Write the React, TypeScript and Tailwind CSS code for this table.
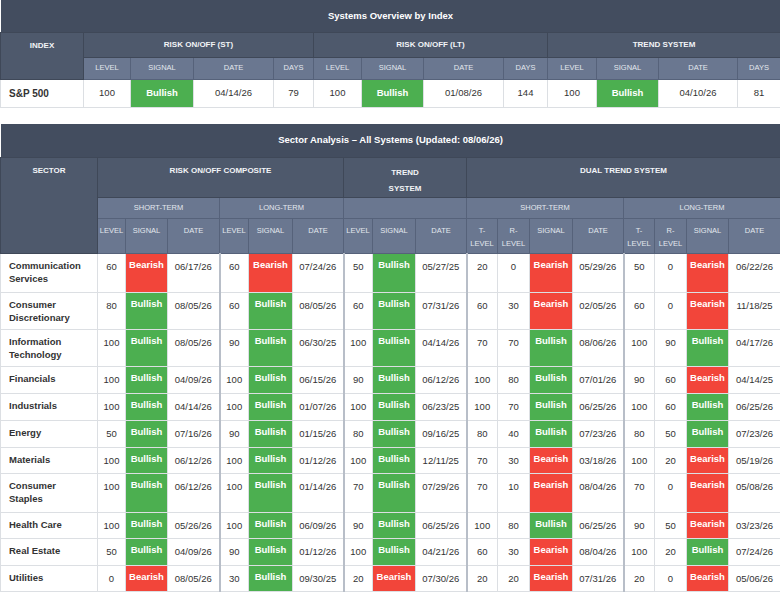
import React from "react";

type Row = {
  name: string[];
  cells: (string | number)[];
  h: string;
};

const SIGNAL_IDX = [1, 4, 7, 11, 15];
const GROUP_START = [3, 6, 9, 13];

const rows: Row[] = [
  { name: ["Communication", "Services"], h: "h-[39px]", cells: [60, "Bearish", "06/17/26", 60, "Bearish", "07/24/26", 50, "Bullish", "05/27/25", 20, 0, "Bearish", "05/29/26", 50, 0, "Bearish", "06/22/26"] },
  { name: ["Consumer", "Discretionary"], h: "h-[37px]", cells: [80, "Bullish", "08/05/26", 60, "Bullish", "08/05/26", 60, "Bullish", "07/31/26", 60, 30, "Bearish", "02/05/26", 60, 0, "Bearish", "11/18/25"] },
  { name: ["Information", "Technology"], h: "h-[37px]", cells: [100, "Bullish", "08/05/26", 90, "Bullish", "06/30/25", 100, "Bullish", "04/14/26", 70, 70, "Bullish", "08/06/26", 100, 90, "Bullish", "04/17/26"] },
  { name: ["Financials"], h: "h-[27px]", cells: [100, "Bullish", "04/09/26", 100, "Bullish", "06/15/26", 90, "Bullish", "06/12/26", 100, 80, "Bullish", "07/01/26", 90, 60, "Bearish", "04/14/25"] },
  { name: ["Industrials"], h: "h-[27px]", cells: [100, "Bullish", "04/14/26", 100, "Bullish", "01/07/26", 100, "Bullish", "06/23/25", 100, 70, "Bullish", "06/25/26", 100, 60, "Bullish", "06/25/26"] },
  { name: ["Energy"], h: "h-[27px]", cells: [50, "Bullish", "07/16/26", 90, "Bullish", "01/15/26", 80, "Bullish", "09/16/25", 80, 40, "Bullish", "07/23/26", 80, 50, "Bullish", "07/23/26"] },
  { name: ["Materials"], h: "h-[26px]", cells: [100, "Bullish", "06/12/26", 100, "Bullish", "01/12/26", 100, "Bullish", "12/11/25", 70, 30, "Bearish", "03/18/26", 100, 20, "Bearish", "05/19/26"] },
  { name: ["Consumer", "Staples"], h: "h-[39px]", cells: [100, "Bullish", "06/12/26", 100, "Bullish", "01/14/26", 70, "Bullish", "07/29/26", 70, 10, "Bearish", "08/04/26", 70, 0, "Bearish", "05/08/26"] },
  { name: ["Health Care"], h: "h-[26px]", cells: [100, "Bullish", "05/26/26", 100, "Bullish", "06/09/26", 90, "Bullish", "06/25/26", 100, 80, "Bullish", "06/25/26", 90, 50, "Bearish", "03/23/26"] },
  { name: ["Real Estate"], h: "h-[27px]", cells: [50, "Bullish", "04/09/26", 90, "Bullish", "01/12/26", 100, "Bullish", "04/21/26", 60, 30, "Bearish", "08/04/26", 100, 20, "Bullish", "07/24/26"] },
  { name: ["Utilities"], h: "h-[26px]", cells: [0, "Bearish", "08/05/26", 30, "Bullish", "09/30/25", 20, "Bearish", "07/30/26", 20, 20, "Bearish", "07/31/26", 20, 0, "Bearish", "05/06/26"] },
];

const topCols = ["w-[83px]", "w-[47px]", "w-[63px]", "w-[80px]", "w-[40px]", "w-[48px]", "w-[62px]", "w-[80px]", "w-[44px]", "w-[49px]", "w-[62px]", "w-[79px]", "w-[43px]"];
const sectorCols = ["w-[97px]", "w-[28px]", "w-[42px]", "w-[52px]", "w-[29px]", "w-[44px]", "w-[51px]", "w-[29px]", "w-[43px]", "w-[51px]", "w-[31px]", "w-[32px]", "w-[43px]", "w-[51px]", "w-[31px]", "w-[32px]", "w-[42px]", "w-[52px]"];

const title = "bg-[#434d5f] text-white text-[9.5px] font-bold text-center";
const head1 = "bg-[#4e596c] text-[#f2f4f7] text-[8px] font-bold text-center border border-[#3f4858]";
const head2 = "bg-[#6a7790] text-[#e3e7ee] text-[7.5px] font-normal text-center border border-[#56627a]";
const cell = "border border-[#dcdfe3] text-[9.5px] text-[#333] text-center";

function signalClass(v: string) {
  return v === "Bullish" ? "bg-[#4caf50]" : "bg-[#f2453a]";
}

function TopTable() {
  const groups = [
    { label: "RISK ON/OFF (ST)", data: [100, "Bullish", "04/14/26", 79] },
    { label: "RISK ON/OFF (LT)", data: [100, "Bullish", "01/08/26", 144] },
    { label: "TREND SYSTEM", data: [100, "Bullish", "04/10/26", 81] },
  ];
  return (
    <table className="w-[780px] table-fixed border-collapse">
      <colgroup>
        {topCols.map((c, i) => (
          <col key={i} className={c} />
        ))}
      </colgroup>
      <thead>
        <tr className="h-[32px]">
          <th colSpan={13} className={title}>
            Systems Overview by Index
          </th>
        </tr>
        <tr className="h-[25px]">
          <th rowSpan={2} className={`${head1} align-top pt-[7px]`}>
            INDEX
          </th>
          {groups.map((g) => (
            <th key={g.label} colSpan={4} className={head1}>
              {g.label}
            </th>
          ))}
        </tr>
        <tr className="h-[22px]">
          {groups.map((g) =>
            ["LEVEL", "SIGNAL", "DATE", "DAYS"].map((s) => (
              <th key={g.label + s} className={head2}>
                {s}
              </th>
            ))
          )}
        </tr>
      </thead>
      <tbody>
        <tr className="h-[28px]">
          <td className={`${cell} text-left pl-[8px] font-bold text-[10px]`}>S&amp;P 500</td>
          {groups.map((g) =>
            g.data.map((v, i) =>
              i === 1 ? (
                <td key={g.label + i} className={`${cell} ${signalClass(String(v))} align-top pt-[6px] text-white text-[8px] font-bold`}>
                  {v}
                </td>
              ) : (
                <td key={g.label + i} className={cell}>
                  {v}
                </td>
              )
            )
          )}
        </tr>
      </tbody>
    </table>
  );
}

function SectorTable() {
  return (
    <table className="w-[780px] table-fixed border-collapse">
      <colgroup>
        {sectorCols.map((c, i) => (
          <col key={i} className={c} />
        ))}
      </colgroup>
      <thead>
        <tr className="h-[34px]">
          <th colSpan={18} className={title}>
            Sector Analysis – All Systems (Updated: 08/06/26)
          </th>
        </tr>
        <tr className="h-[40px]">
          <th rowSpan={3} className={`${head1} align-top pt-[7px]`}>
            SECTOR
          </th>
          <th colSpan={6} className={`${head1} align-top pt-[7px]`}>
            RISK ON/OFF COMPOSITE
          </th>
          <th colSpan={3} className={`${head1} align-top pt-[7px] leading-[16px]`}>
            TREND
            <br />
            SYSTEM
          </th>
          <th colSpan={8} className={`${head1} align-top pt-[7px]`}>
            DUAL TREND SYSTEM
          </th>
        </tr>
        <tr className="h-[21px]">
          <th colSpan={3} className={head2}>SHORT-TERM</th>
          <th colSpan={3} className={head2}>LONG-TERM</th>
          <th colSpan={3} className={head2}></th>
          <th colSpan={4} className={head2}>SHORT-TERM</th>
          <th colSpan={4} className={head2}>LONG-TERM</th>
        </tr>
        <tr className="h-[35px]">
          {["LEVEL", "SIGNAL", "DATE", "LEVEL", "SIGNAL", "DATE", "LEVEL", "SIGNAL", "DATE"].map((s, i) => (
            <th key={i} className={`${head2} align-top pt-[5px] leading-[13px]`}>
              {s}
            </th>
          ))}
          {[0, 1].map((k) => (
            <React.Fragment key={k}>
              <th className={`${head2} align-top pt-[5px] leading-[13px]`}>
                T-
                <br />
                LEVEL
              </th>
              <th className={`${head2} align-top pt-[5px] leading-[13px]`}>
                R-
                <br />
                LEVEL
              </th>
              <th className={`${head2} align-top pt-[5px] leading-[13px]`}>SIGNAL</th>
              <th className={`${head2} align-top pt-[5px] leading-[13px]`}>DATE</th>
            </React.Fragment>
          ))}
        </tr>
      </thead>
      <tbody>
        {rows.map((r) => (
          <tr key={r.name.join(" ")} className={r.h}>
            <td className={`${cell} text-left align-top pl-[8px] pt-[5px] font-bold leading-[13px]`}>
              {r.name.map((n, i) => (
                <div key={i}>{n}</div>
              ))}
            </td>
            {r.cells.map((v, i) => {
              const group = GROUP_START.includes(i) ? "border-l-2 border-l-[#b8bec8]" : "";
              if (SIGNAL_IDX.includes(i)) {
                return (
                  <td key={i} className={`${cell} ${group} ${signalClass(String(v))} align-top pt-[5px] text-white text-[8px] font-bold leading-[11px]`}>
                    {v}
                  </td>
                );
              }
              return (
                <td key={i} className={`${cell} ${group} align-top pt-[6px] leading-[13px]`}>
                  {v}
                </td>
              );
            })}
          </tr>
        ))}
      </tbody>
    </table>
  );
}

export default function App() {
  return (
    <div className="w-[780px] h-[596px] overflow-hidden bg-white font-['Liberation_Sans',Arial,sans-serif]">
      <TopTable />
      <div className="h-[16px]" />
      <SectorTable />
    </div>
  );
}
